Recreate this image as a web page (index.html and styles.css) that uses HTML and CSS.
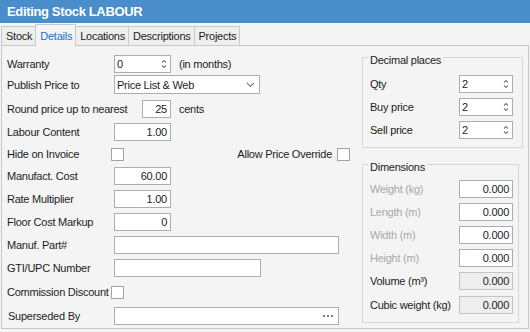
FILE: index.html
```html
<!DOCTYPE html>
<html lang="en">
  <head>
    <meta charset="UTF-8" />
    <meta name="viewport" content="width=device-width, initial-scale=1.0" />
    <title>Editing Stock LABOUR</title>
    <link rel="stylesheet" href="styles.css">
  </head>
  <body>
    <div class="titlebar">Editing Stock LABOUR</div>

    <div class="tabs">
      <div class="tab">Stock</div>
      <div class="tab active">Details</div>
      <div class="tab">Locations</div>
      <div class="tab">Descriptions</div>
      <div class="tab">Projects</div>
    </div>

    <div class="panel">
      <div class="main-form">
        <div class="row">
          <span class="label">Warranty</span>
          <div class="field w-num spin">
            <span>0</span>
            <svg width="6" height="12" viewBox="0 0 6 12"><polyline points="1,4.5 3,2.5 5,4.5" /><polyline points="1,7.5 3,9.5 5,7.5" /></svg>
          </div>
          <span class="unit">(in months)</span>
        </div>

        <div class="row tight">
          <span class="label">Publish Price to</span>
          <div class="field w-select select">
            <span>Price List &amp; Web</span>
            <svg width="9" height="6" viewBox="0 0 9 6"><polyline points="1,1 4.5,4.5 8,1" /></svg>
          </div>
        </div>

        <div class="row loose">
          <span class="label label-wide">Round price up to nearest</span>
          <div class="field w-small num"><span>25</span></div>
          <span class="unit">cents</span>
        </div>

        <div class="row">
          <span class="label">Labour Content</span>
          <div class="field w-num num"><span>1.00</span></div>
        </div>

        <div class="row near">
          <span class="label">Hide on Invoice</span>
          <span class="check"></span>
          <span class="spacer"></span>
          <span>Allow Price Override</span>
          <span class="check check-right"></span>
        </div>

        <div class="row near">
          <span class="label">Manufact. Cost</span>
          <div class="field w-num num"><span>60.00</span></div>
        </div>

        <div class="row">
          <span class="label">Rate Multiplier</span>
          <div class="field w-num num"><span>1.00</span></div>
        </div>

        <div class="row">
          <span class="label">Floor Cost Markup</span>
          <div class="field w-num num"><span>0</span></div>
        </div>

        <div class="row">
          <span class="label">Manuf. Part#</span>
          <div class="field w-long"></div>
        </div>

        <div class="row">
          <span class="label">GTI/UPC Number</span>
          <div class="field w-mid"></div>
        </div>

        <div class="row loose">
          <span class="label">Commission Discount</span>
          <span class="check"></span>
        </div>

        <div class="row loose">
          <span class="label label-indent">Superseded By</span>
          <div class="field w-long lookup">
            <svg width="10" height="2" viewBox="0 0 10 2"><rect x="0" y="0" width="2" height="2" /><rect x="4" y="0" width="2" height="2" /><rect x="8" y="0" width="2" height="2" /></svg>
          </div>
        </div>
      </div>

      <div class="side">
        <div class="group decimals">
          <div class="group-title">Decimal places</div>
          <div class="group-rows">
            <div class="grow">
              <span>Qty</span>
              <div class="field w-side spin">
                <span>2</span>
                <svg width="6" height="12" viewBox="0 0 6 12"><polyline points="1,4.5 3,2.5 5,4.5" /><polyline points="1,7.5 3,9.5 5,7.5" /></svg>
              </div>
            </div>
            <div class="grow">
              <span>Buy price</span>
              <div class="field w-side spin">
                <span>2</span>
                <svg width="6" height="12" viewBox="0 0 6 12"><polyline points="1,4.5 3,2.5 5,4.5" /><polyline points="1,7.5 3,9.5 5,7.5" /></svg>
              </div>
            </div>
            <div class="grow">
              <span>Sell price</span>
              <div class="field w-side spin">
                <span>2</span>
                <svg width="6" height="12" viewBox="0 0 6 12"><polyline points="1,4.5 3,2.5 5,4.5" /><polyline points="1,7.5 3,9.5 5,7.5" /></svg>
              </div>
            </div>
          </div>
        </div>

        <div class="group dimensions">
          <div class="group-title">Dimensions</div>
          <div class="group-rows">
            <div class="grow muted">
              <span>Weight (kg)</span>
              <div class="field w-side num"><span>0.000</span></div>
            </div>
            <div class="grow muted">
              <span>Length (m)</span>
              <div class="field w-side num"><span>0.000</span></div>
            </div>
            <div class="grow muted">
              <span>Width (m)</span>
              <div class="field w-side num"><span>0.000</span></div>
            </div>
            <div class="grow muted">
              <span>Height (m)</span>
              <div class="field w-side num"><span>0.000</span></div>
            </div>
            <div class="grow">
              <span>Volume (m³)</span>
              <div class="field w-side num readonly"><span>0.000</span></div>
            </div>
            <div class="grow last">
              <span>Cubic weight (kg)</span>
              <div class="field w-side num readonly"><span>0.000</span></div>
            </div>
          </div>
        </div>
      </div>
    </div>
  </body>
</html>
```

FILE: styles.css
```css
:root {
  --bg: #f4f4f4;
  --text: #1c1c24;
  --border: #adadad;
  --tab-border: #c8c8c8;
  --group-border: #d6d6d6;
  --accent: #4a8dcb;
}

body {
  margin: 0;
  font-family: "Liberation Sans", Arial, sans-serif;
  font-size: 11px;
  letter-spacing: -0.25px;
  color: var(--text);
  background: var(--bg);
}

.titlebar {
  height: 23px;
  line-height: 23px;
  padding-left: 7px;
  background: var(--accent);
  color: white;
  font-size: 13px;
  font-weight: bold;
  letter-spacing: -0.35px;
}

/* tab strip */
.tabs {
  display: flex;
  align-items: flex-end;
  height: 22px;
  padding-left: 1px;
}

.tab {
  box-sizing: border-box;
  height: 19px;
  line-height: 18px;
  padding: 0 3px 0 4px;
  margin-right: -1px;
  border: 1px solid var(--tab-border);
  border-bottom: 0;
  background: #eeeeee;
}

.tab.active {
  position: relative;
  z-index: 1;
  height: 22px;
  padding-top: 2px;
  margin-bottom: -1px;
  background: var(--bg);
  color: #1f6fc5;
}

.panel {
  box-sizing: border-box;
  display: flex;
  width: 528px;
  height: 284px;
  margin-left: 1px;
  padding: 9px 0 0 5px;
  border: 1px solid var(--tab-border);
}

/* left form */
.main-form {
  display: flex;
  flex-direction: column;
  gap: 5px;
  width: 343px;
}

.row {
  display: flex;
  align-items: center;
  height: 18px;
}

.row.tight {
  height: 19px;
  margin-top: -3px;
}

.row.loose {
  margin-top: 1px;
}

.row.near {
  margin-top: -1px;
}

.label {
  width: 107px;
  flex-shrink: 0;
  white-space: nowrap;
}

.label-wide {
  width: 135px;
}

.label-indent {
  padding-left: 1px;
  width: 106px;
}

.unit {
  margin-left: 8px;
}

.spacer {
  flex: 1;
}

.field {
  box-sizing: border-box;
  display: flex;
  align-items: center;
  height: 18px;
  padding: 0 3px 0 2px;
  border: 1px solid var(--border);
  background: white;
}

.field svg {
  fill: none;
  stroke: #7c7c7c;
  stroke-width: 1.1;
}

.field.num {
  justify-content: flex-end;
}

.field.spin,
.field.select {
  justify-content: space-between;
}

.field.select {
  height: 19px;
  padding-right: 4px;
}

.field.lookup {
  justify-content: flex-end;
  padding-right: 5px;
}

.field.lookup svg {
  fill: #777777;
  stroke: none;
}

.field.readonly {
  background: #eeeeee;
  border-color: #c4c4c4;
}

.w-num {
  width: 57px;
}

.w-small {
  width: 29px;
}

.w-select {
  width: 146px;
}

.w-long {
  width: 225px;
}

.w-mid {
  width: 147px;
}

.w-side {
  width: 54px;
}

.check {
  box-sizing: border-box;
  flex-shrink: 0;
  width: 13px;
  height: 13px;
  margin-left: -3px;
  border: 1px solid #a2a2a2;
  background: white;
}

.check-right {
  margin-left: 5px;
}

/* right side group boxes */
.side {
  display: flex;
  flex-direction: column;
  gap: 16px;
  margin-left: 12px;
  padding-top: 2px;
}

.group {
  box-sizing: border-box;
  padding: 0 0 8px 7px;
  border: 1px solid var(--group-border);
}

.decimals {
  width: 161px;
}

.dimensions {
  width: 157px;
}

.group-title {
  width: max-content;
  line-height: 14px;
  margin: -5px 0 0 -2px;
  padding: 0 2px;
  background: var(--bg);
}

.group-rows {
  display: flex;
  flex-direction: column;
  gap: 5px;
}

.decimals .group-rows {
  margin-top: 8px;
}

.dimensions .group-rows {
  margin-top: 6px;
}

.grow {
  display: flex;
  align-items: center;
  justify-content: space-between;
  height: 18px;
  width: 143px;
}

.grow.last {
  margin-top: 1px;
}

.grow.muted > span {
  color: #a8a8a8;
}
```
